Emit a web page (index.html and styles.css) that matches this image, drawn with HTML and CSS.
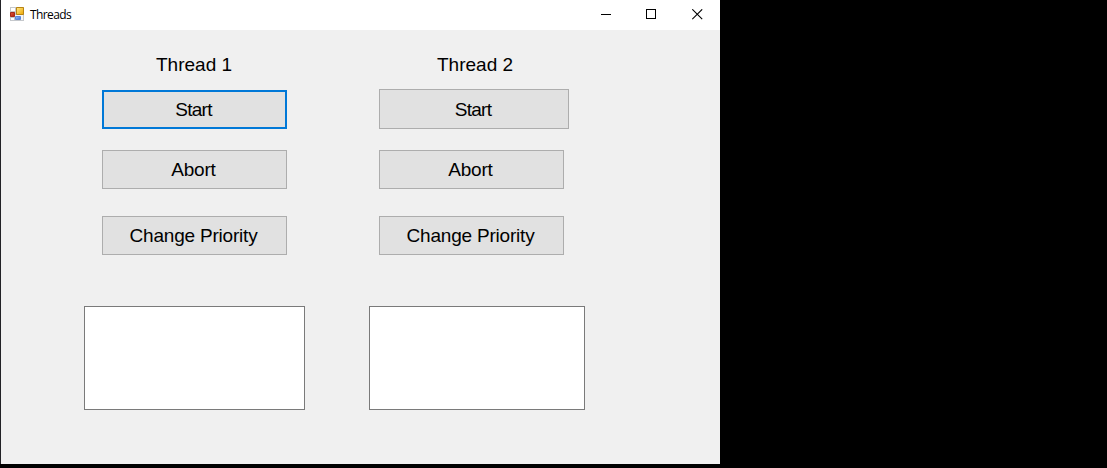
FILE: index.html
```html
<!DOCTYPE html>
<html lang="en">
<head>
<meta charset="utf-8">
<title>Threads</title>
<link rel="stylesheet" href="styles.css">
</head>
<body>
<main class="window">
  <header class="titlebar">
    <svg class="app-icon" width="14" height="14" viewBox="0 0 14 14">
      <defs>
        <linearGradient id="gold" x2="1" y2="1"><stop stop-color="#ffe98c"/><stop offset="1" stop-color="#eda600"/></linearGradient>
        <linearGradient id="red" x2="1" y2="1"><stop stop-color="#e45a3c"/><stop offset="1" stop-color="#ab1a0c"/></linearGradient>
        <linearGradient id="blue" x2="1" y2="1"><stop stop-color="#9cc0fa"/><stop offset="1" stop-color="#3c6fd8"/></linearGradient>
      </defs>
      <path fill="#c5c8cc" d="M0 0h14v14H0z"/>
      <path fill="#fff" d="M1 1h4v3H1zM1 11h3v2H1z"/>
      <path fill="#f5f6f8" d="M5 8h8v5H5z"/>
      <path fill="url(#gold)" stroke="#b88413" d="M6.500.5h7v7h-7z"/>
      <path fill="url(#red)" stroke="#a52a1a" d="M.5 5.500h4v4h-4z"/>
      <path fill="url(#blue)" stroke="#5c87d8" d="M5.500 9.500h5v3h-5z"/>
    </svg>
    <h1 class="title">Threads</h1>
    <div class="controls">
      <svg class="control minimize" viewBox="0 0 11 11"><path d="M0 5.500h10"/></svg>
      <svg class="control" viewBox="0 0 11 11"><path d="M.5.5h9v9h-9z"/></svg>
      <svg class="control cross" viewBox="0 0 11 11"><path d="M.3.3l9.900 9.900M10.200.3L.3 10.200"/></svg>
    </div>
  </header>
  <div class="form">
    <section class="thread thread-one">
      <h2 class="label">Thread 1</h2>
      <button class="button start focused">Start</button>
      <button class="button abort">Abort</button>
      <button class="button priority">Change Priority</button>
      <div class="output"></div>
    </section>
    <section class="thread thread-two">
      <h2 class="label">Thread 2</h2>
      <button class="button start">Start</button>
      <button class="button abort">Abort</button>
      <button class="button priority">Change Priority</button>
      <div class="output"></div>
    </section>
  </div>
</main>
</body>
</html>
```
FILE: styles.css
```css
* { box-sizing: border-box; }
body { margin: 0; background: #000; overflow: hidden; }
.window {
  width: 720px;
  height: 464px;
  border-left: 1px solid #222226;
  background: #f0f0f0;
  color: #000;
}
.titlebar {
  display: flex;
  height: 30px;
  padding-left: 9px;
  background: #fff;
}
.app-icon { margin-top: 7px; }
.title {
  margin: 0 0 0 6px;
  font: 12px/30px "Open Sans", "Noto Sans", sans-serif;
  letter-spacing: -0.6px;
}
.controls {
  display: flex;
  gap: 35px;
  margin: 9px 17px 0 auto;
}
.control {
  width: 11px;
  height: 11px;
  fill: none;
  stroke: #000;
  shape-rendering: crispEdges;
}
.minimize { margin-right: -1px; }
.cross { shape-rendering: auto; stroke-width: 1.1; }
.form { display: flex; gap: 64px; padding-left: 83px; }
.thread {
  display: flex;
  flex-direction: column;
  align-items: flex-start;
  font: 19px/22px "Liberation Sans", Arial, sans-serif;
}
.thread-one { width: 221px; }
.thread-two { width: 216px; }
.label { margin: 24px 0 0 72px; font: inherit; }
.thread-two .label { margin-left: 68px; }
.button {
  width: 185px;
  height: 39px;
  margin: 0 0 0 18px;
  padding: 0 2px 0 0;
  border: 1px solid #adadad;
  border-radius: 0;
  background: #e1e1e1;
  color: #000;
  font: inherit;
  letter-spacing: -0.2px;
}
.thread-two .button { margin-left: 10px; }
.thread .start { margin-top: 14px; letter-spacing: -0.7px; }
.thread-two .start {
  width: 190px;
  height: 40px;
  margin-top: 13px;
  padding-top: 2px;
}
.focused { border: 2px solid #0078d7; }
.thread .abort { margin-top: 21px; }
.thread .priority { margin-top: 27px; }
.output {
  align-self: stretch;
  height: 104px;
  margin-top: 51px;
  border: 1px solid #7a7a7a;
  background: #fff;
}
```
